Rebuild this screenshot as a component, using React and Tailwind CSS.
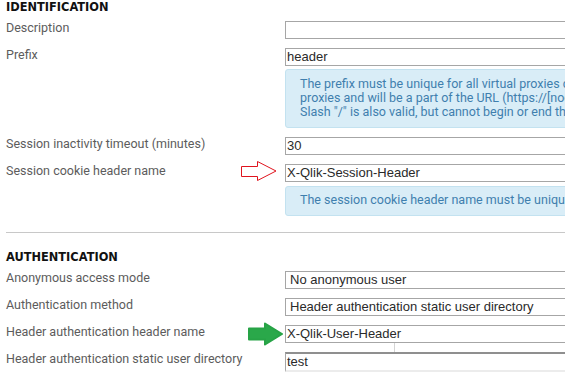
const labelFont = { fontFamily: 'Roboto, "Noto Sans", sans-serif' }

function RedArrow() {
  return (
    <svg width="38" height="22" viewBox="0 0 38 22" className="absolute left-[234px] top-[-4px]">
      <polygon
        points="1.5,6.5 17.5,6.5 17.5,1.5 36,11 17.5,20.5 17.5,16.5 1.5,16.5"
        fill="#fff"
        stroke="#e0141e"
        strokeWidth="1"
      />
    </svg>
  )
}

function GreenArrow() {
  return (
    <svg width="38" height="26" viewBox="0 0 38 26" className="absolute left-[240px] top-[-4px]">
      <polygon
        points="3,7.5 19,7.5 19,2.5 36,13 19,23.5 19,18.5 3,18.5"
        fill="#2aa84a"
        stroke="#27a346"
        strokeWidth="2"
        strokeLinejoin="round"
      />
    </svg>
  )
}

function Heading({ children, className = '' }) {
  return (
    <div
      className={`h-[14px] text-[11.4px] leading-[14px] font-bold text-[#111] ${className}`}
      style={{ fontFamily: '"DejaVu Sans", sans-serif' }}
    >
      {children}
    </div>
  )
}

function Field({ label, arrow, children }) {
  return (
    <div className="flex items-start">
      <div className="relative w-[279px] shrink-0 text-[12.5px] leading-[14px] text-[#5c5c5c]" style={labelFont}>
        {label}
        {arrow}
      </div>
      <div className="relative flex-1 flex flex-col">{children}</div>
    </div>
  )
}

function TextBox({ value, select }) {
  return (
    <div
      className={`h-[18px] border border-[#a6a6a6] bg-white text-[13px] leading-[16px] text-[#2a2a2a] whitespace-nowrap ${select ? 'pl-[4px]' : 'pl-[1px]'}`}
      style={{ fontFamily: '"Liberation Sans", Arial, sans-serif' }}
    >
      {value}
    </div>
  )
}

function Info({ lines, className = '' }) {
  return (
    <div
      className={`rounded-[3px] border border-[#c3e2f0] bg-[#d9edf7] pl-[14px] text-[12.5px] leading-[14px] text-[#3f7fae] ${className}`}
      style={labelFont}
    >
      {lines.map((l, i) => (
        <div key={i} className="whitespace-nowrap">{l}</div>
      ))}
    </div>
  )
}

export default function App() {
  return (
    <div className="w-[565px] h-[379px] overflow-hidden bg-white">
      <div className="w-[800px] pl-[6px]">
        <Heading>IDENTIFICATION</Heading>
        <div className="mt-[7px] flex flex-col gap-[9px]">
          <Field label="Description">
            <TextBox value="" />
          </Field>
          <Field label="Prefix">
            <TextBox value="header" />
            <Info
              className="mt-[3px] h-[59px] pt-[7px]"
              lines={[
                'The prefix must be unique for all virtual proxies connected to the same',
                'proxies and will be a part of the URL (https://[node]/[prefix]/).',
                'Slash "/" is also valid, but cannot begin or end the prefix.',
              ]}
            />
          </Field>
          <Field label="Session inactivity timeout (minutes)">
            <TextBox value="30" />
          </Field>
          <Field label="Session cookie header name" arrow={<RedArrow />}>
            <TextBox value="X-Qlik-Session-Header" />
            <Info
              className="mt-[4px] h-[30px] pt-[6px]"
              lines={['The session cookie header name must be unique for all virtual proxies.']}
            />
          </Field>
        </div>

        <div className="mt-[16px] h-px bg-[#c8c8c8]" />

        <Heading className="mt-[17px]">AUTHENTICATION</Heading>
        <div className="mt-[7px] flex flex-col gap-[9px]">
          <Field label="Anonymous access mode">
            <TextBox value="No anonymous user" select />
          </Field>
          <Field label="Authentication method">
            <TextBox value="Header authentication static user directory" select />
          </Field>
          <Field label="Header authentication header name" arrow={<GreenArrow />}>
            <TextBox value="X-Qlik-User-Header" />
            <div className="absolute left-[109px] top-[18px] h-[9px] w-px bg-[#d4d4d4]" />
          </Field>
          <Field label="Header authentication static user directory">
            <div
              className="h-[20px] border-t-2 border-l border-[#8f8f8f] border-l-[#a6a6a6] border-b-2 border-b-[#ececec] bg-white pl-[1px] text-[13px] leading-[16px] text-[#2a2a2a]"
              style={{ fontFamily: '"Liberation Sans", Arial, sans-serif' }}
            >
              test
            </div>
          </Field>
        </div>
      </div>
    </div>
  )
}
